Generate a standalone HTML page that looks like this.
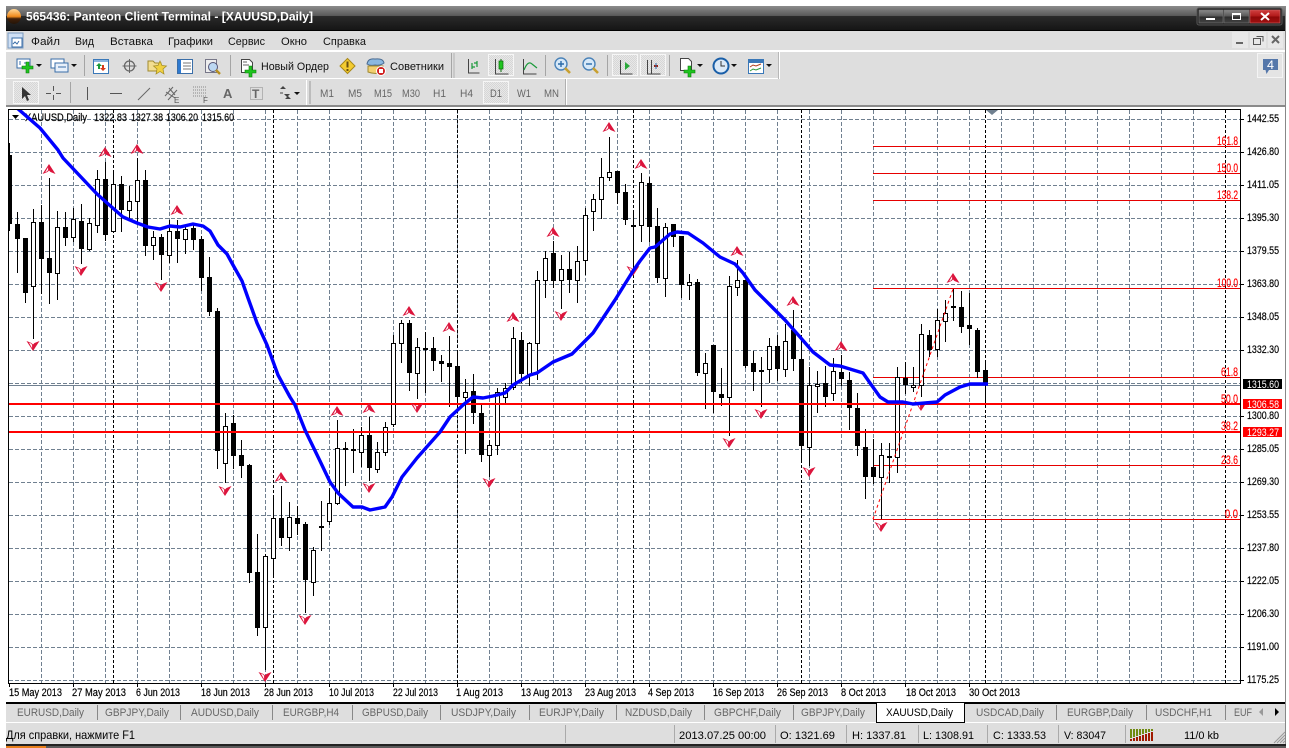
<!DOCTYPE html>
<html><head><meta charset="utf-8"><title>Panteon Client Terminal</title>
<style>
html,body{margin:0;padding:0;background:#fff;width:1289px;height:748px;overflow:hidden}
svg{display:block;position:absolute;left:0;top:0}
text{font-family:"Liberation Sans","Noto Sans CJK SC",sans-serif;font-size:11px}
.t text{fill:#666}
.c{shape-rendering:crispEdges}
.b text{stroke:currentColor;stroke-width:.2px}
</style></head><body>
<svg width="1289" height="748" viewBox="0 0 1289 748" xmlns="http://www.w3.org/2000/svg">
<defs>
<linearGradient id="tg" x1="0" y1="0" x2="0" y2="1"><stop offset="0" stop-color="#8c8c8c"/><stop offset=".4" stop-color="#585858"/><stop offset=".41" stop-color="#2a2a2a"/><stop offset="1" stop-color="#141414"/></linearGradient>
<linearGradient id="bg" x1="0" y1="0" x2="0" y2="1"><stop offset="0" stop-color="#8a8a8a"/><stop offset=".5" stop-color="#555"/><stop offset=".51" stop-color="#2c2c2c"/><stop offset="1" stop-color="#444"/></linearGradient>
<linearGradient id="rg" x1="0" y1="0" x2="0" y2="1"><stop offset="0" stop-color="#d04040"/><stop offset=".5" stop-color="#b01818"/><stop offset=".51" stop-color="#8c0808"/><stop offset="1" stop-color="#a01010"/></linearGradient>
<linearGradient id="og" x1="0" y1="0" x2="0" y2="1"><stop offset="0" stop-color="#ffd89a"/><stop offset=".5" stop-color="#f08a1c"/><stop offset=".65" stop-color="#40200a"/><stop offset="1" stop-color="#241408"/></linearGradient>
<pattern id="chk" width="2" height="2" patternUnits="userSpaceOnUse"><rect width="2" height="2" fill="#e8e8e8"/><rect width="1" height="1" fill="#d6d6d6"/><rect x="1" y="1" width="1" height="1" fill="#d6d6d6"/></pattern>
<g id="u"><path d="M-6.500 5L0-5L6.500 5L1.500 3L0 1.500L-1.500 3Z" fill="#dc143c"/><path d="M-3.800 3.200L-.9-1.800V1L-2 2.400Z" fill="#fff"/></g>
<g id="d"><path d="M-6.500-5L-1.500-3L0-1.500L1.500-3L6.500-5L0 5Z" fill="#dc143c"/><path d="M-4-3.400L-1.700-2.400L-.9-1V2.200Z" fill="#fff"/></g>
</defs>

<!-- title bar -->
<rect x="6" y="6" width="1280" height="25" fill="url(#tg)"/>
<rect x="6" y="30" width="1280" height="1" fill="#000"/>
<ellipse cx="14" cy="16.500" rx="7" ry="7.500" fill="url(#og)"/>
<text x="26" y="20.500" fill="#fff" font-weight="bold" style="font-size:12px" textLength="287" lengthAdjust="spacingAndGlyphs">565436: Panteon Client Terminal - [XAUUSD,Daily]</text>
<rect x="1197" y="8" width="85" height="17" rx="2" fill="#222" stroke="#555"/>
<rect x="1199" y="10" width="24" height="13" fill="url(#bg)" stroke="#777" stroke-width=".6"/>
<rect x="1224" y="10" width="25" height="13" fill="url(#bg)" stroke="#777" stroke-width=".6"/>
<rect x="1250" y="10" width="30" height="13" fill="url(#rg)" stroke="#c66" stroke-width=".6"/>
<rect x="1206" y="18" width="9" height="2" fill="#fff"/>
<rect x="1232.500" y="13.500" width="8" height="6" fill="none" stroke="#fff"/><rect x="1232" y="13" width="9" height="2" fill="#fff"/>
<path d="M1261 13L1269 20M1269 13L1261 20" stroke="#fff" stroke-width="2"/>

<!-- menu -->
<rect x="6" y="31" width="1280" height="76" fill="#dedede"/>
<rect x="8" y="33" width="15" height="15" fill="#cfe0f5" stroke="#7a9ac0"/>
<rect x="12" y="38" width="10" height="9" fill="#fff" stroke="#3a6ea8"/>
<path d="M13 44l2-2 2 2 2-3" stroke="#3a6ea8" fill="none"/>
<g fill="#111">
<text x="31" y="45" textLength="29" lengthAdjust="spacingAndGlyphs">Файл</text>
<text x="75" y="45" textLength="19" lengthAdjust="spacingAndGlyphs">Вид</text>
<text x="110" y="45" textLength="43" lengthAdjust="spacingAndGlyphs">Вставка</text>
<text x="168" y="45" textLength="45" lengthAdjust="spacingAndGlyphs">Графики</text>
<text x="228" y="45" textLength="37" lengthAdjust="spacingAndGlyphs">Сервис</text>
<text x="281" y="45" textLength="26" lengthAdjust="spacingAndGlyphs">Окно</text>
<text x="323" y="45" textLength="43" lengthAdjust="spacingAndGlyphs">Справка</text>
</g>
<g class="c">
<rect x="1232" y="32" width="16" height="16" fill="#e8e8e8"/><rect x="1236" y="42" width="7" height="2" fill="#666"/>
<rect x="1250" y="32" width="16" height="16" fill="#e8e8e8"/><rect x="1253.500" y="38.500" width="7" height="6" fill="none" stroke="#555"/><path d="M1256.500 36.500h6.500v5" fill="none" stroke="#555"/>
<rect x="1268" y="32" width="15" height="16" fill="#e8e8e8"/></g>
<path d="M1272 36l7 7M1279 36l-7 7" stroke="#666" stroke-width="2"/>

<!-- toolbars structure -->
<g class="c">
<rect x="6" y="50" width="1280" height="2" fill="#fff"/>
<rect x="6" y="78" width="774" height="1" fill="#fff"/>
<rect x="779" y="52" width="1" height="27" fill="#fff"/><rect x="778" y="52" width="1" height="27" fill="#b8b8b8"/>
<rect x="566" y="79" width="1" height="26" fill="#fff"/><rect x="565" y="79" width="1" height="26" fill="#b0b0b0"/>
<rect x="6" y="105" width="1280" height="2" fill="#8a8a8a"/>
<rect x="84" y="55" width="1" height="21" fill="#a5a5a5"/>
<rect x="230" y="55" width="1" height="21" fill="#a5a5a5"/>
<rect x="451" y="53" width="1" height="25" fill="#a5a5a5"/><rect x="453" y="53" width="2" height="25" fill="#c8c8c8"/>
<rect x="545" y="55" width="1" height="21" fill="#a5a5a5"/>
<rect x="607" y="55" width="1" height="21" fill="#a5a5a5"/>
<rect x="669" y="55" width="1" height="21" fill="#a5a5a5"/>
<rect x="70" y="82" width="1" height="21" fill="#a5a5a5"/>
<rect x="306" y="80" width="1" height="25" fill="#fff"/><rect x="309" y="81" width="2" height="23" fill="#bcbcbc"/>
<!-- active boxes -->
<rect x="488.500" y="54.500" width="25" height="21" fill="url(#chk)" stroke="#f6f6f6"/>
<rect x="612.500" y="54.500" width="25" height="21" fill="url(#chk)" stroke="#f6f6f6"/>
<rect x="640.500" y="54.500" width="25" height="21" fill="url(#chk)" stroke="#f6f6f6"/>
<rect x="13.500" y="81.500" width="25" height="22" fill="url(#chk)" stroke="#f6f6f6"/>
<rect x="483.500" y="81.500" width="25" height="22" fill="url(#chk)" stroke="#f6f6f6"/>
<rect x="1257.500" y="53.500" width="25" height="24" fill="#e4e4e4" stroke="#f4f4f4"/>
</g>

<!-- toolbar 1 icons -->
<rect x="17" y="59" width="13" height="9" fill="#fff" stroke="#3a6ea8"/><path d="M20 61v4M24 63h4" stroke="#3a6ea8"/>
<path d="M26 62h3v4h4v3h-4v4h-3v-4h-4v-3h4z" fill="#1fc41f" stroke="#0a7a0a" stroke-width=".6"/>
<path d="M36 64h6l-3 3z" fill="#111"/>
<rect x="51" y="59" width="13" height="9" fill="#fff" stroke="#3a6ea8"/><rect x="55" y="63" width="13" height="9" fill="#e8f0fa" stroke="#3a6ea8"/><path d="M58 67h8" stroke="#3a6ea8"/>
<path d="M71 64h6l-3 3z" fill="#111"/>
<rect x="93.500" y="59.500" width="15" height="14" fill="#fff" stroke="#3a78b8"/><rect x="94" y="60" width="14" height="2" fill="#8ab4e0"/><path d="M99 63l3 3h-2v3h-2v-3h-2z" fill="#1a9a3a"/><path d="M103 71l-3-3h2v-3h2v3h2z" fill="#d83a1a"/>
<circle cx="129.500" cy="66" r="5" fill="none" stroke="#666" stroke-width="1.300"/><path d="M129.500 59v14M122.500 66h14" stroke="#666"/>
<path d="M148 61h5l2 2h6v8h-13z" fill="#f2dd90" stroke="#a08a30"/><path d="M160 61l2 4.500 4.500.5-3.500 3 1 5-4-2.500-4 2.500 1-5-3.500-3 4.500-.5z" fill="#f0d040" stroke="#a08a20" stroke-width=".7"/>
<rect x="177.500" y="59.500" width="15" height="14" fill="#fff" stroke="#3a6ea8"/><rect x="178" y="60" width="3" height="13" fill="#2f7ad0"/><path d="M183 63h8M183 66h8M183 69h8" stroke="#777"/>
<rect x="205.500" y="59.500" width="11" height="13" fill="#eee" stroke="#778"/><circle cx="213" cy="67" r="4.500" fill="#bcd8f2" stroke="#557"/><path d="M216 70l4 4" stroke="#b89020" stroke-width="2.400"/>
<path d="M241.500 59.500h8l3 3v10h-11z" fill="#fff" stroke="#444"/><path d="M243 62h4M243 65h6" stroke="#666"/>
<path d="M249 66h3v4h4v3h-4v4h-3v-4h-4v-3h4z" fill="#1fc41f" stroke="#0a7a0a" stroke-width=".6"/>
<text x="261" y="70" fill="#111" textLength="68" lengthAdjust="spacingAndGlyphs">Новый Ордер</text>
<path d="M347.500 58.500l7.500 7.500-7.500 7.500-7.500-7.500z" fill="#f4cc30" stroke="#a8881a"/><rect x="346.500" y="61.500" width="2" height="6" fill="#6a5010"/><rect x="346.500" y="69" width="2" height="2" fill="#6a5010"/>
<path d="M367 64q1-6 8-5q8-1 9 4q-4 3-9 2q-5 1-8-1z" fill="#8ab8e0" stroke="#4a6a90"/><path d="M368 66h15v6q-7 3-15 0z" fill="#f2d070" stroke="#a08a30"/><circle cx="381" cy="71" r="4.500" fill="#d02020" stroke="#fff"/><rect x="379" y="69" width="4" height="4" fill="#fff"/>
<text x="390" y="70" fill="#111" textLength="54" lengthAdjust="spacingAndGlyphs">Советники</text>
<path d="M468.500 59v14h11" stroke="#444" fill="none"/><path d="M472 63v6M477 61v6M472 67h3M477 63h-3" stroke="#1a9a3a" stroke-width="1.200" fill="none"/>
<path d="M495.500 59v15h13" stroke="#444" fill="none"/><rect x="499" y="61" width="4" height="8" fill="#1fc41f" stroke="#0a6a0a" stroke-width=".7"/><path d="M501 59v2M501 69v3" stroke="#0a6a0a"/>
<path d="M523.500 59v15h13" stroke="#444" fill="none"/><path d="M524 70q4-10 8-6l5 4" stroke="#1a9a3a" fill="none" stroke-width="1.200"/>
<circle cx="561" cy="64" r="6" fill="#d6e8f8" stroke="#4a82b8" stroke-width="1.400"/><path d="M558 64h6M561 61v6" stroke="#2a6aa8" stroke-width="1.400"/><path d="M565 68l5 5" stroke="#c8a030" stroke-width="2.600"/>
<circle cx="589" cy="64" r="6" fill="#d6e8f8" stroke="#4a82b8" stroke-width="1.400"/><path d="M586 64h6" stroke="#2a6aa8" stroke-width="1.400"/><path d="M593 68l5 5" stroke="#c8a030" stroke-width="2.600"/>
<path d="M620.500 60v14h12" stroke="#444" fill="none"/><path d="M625 62l5 4-5 4z" fill="#2aa83a"/>
<path d="M647.500 60v14h13M651.500 60v14" stroke="#444" fill="none"/><path d="M654 66h4" stroke="#a02010" stroke-width="2"/><path d="M656 63v6" stroke="#2a6aa8"/>
<path d="M680.500 58.500h8l3 3v9h-11z" fill="#fff" stroke="#444"/><path d="M688 66h3v4h4v3h-4v4h-3v-4h-4v-3h4z" fill="#1fc41f" stroke="#0a7a0a" stroke-width=".6"/>
<path d="M697 64h6l-3 3z" fill="#111"/>
<circle cx="721" cy="66" r="7.500" fill="#dbe9f7" stroke="#1a5fa8" stroke-width="2"/><path d="M721 61v5h4" stroke="#333" fill="none"/>
<path d="M731 64h6l-3 3z" fill="#111"/>
<rect x="748.500" y="59.500" width="15" height="14" fill="#fff" stroke="#3a78b8"/><rect x="749" y="60" width="14" height="3" fill="#3a78b8"/><path d="M750 67l3-2 3 1 5-2" stroke="#b04020" fill="none"/><path d="M750 71l3-2 3 1 5-2" stroke="#2a9a3a" fill="none"/>
<path d="M766 64h6l-3 3z" fill="#111"/>
<path d="M1263 59h15v11h-9l-2.500 4-1-4h-2.500z" fill="#5577aa"/>
<text x="1267" y="69" fill="#fff" textLength="7" lengthAdjust="spacingAndGlyphs" style="font-size:12px">4</text>

<!-- toolbar 2 icons -->
<path d="M22 87v12l3-3 2 5 2-1-2-5h4z" fill="#333"/>
<path d="M53.500 86v5M53.500 95v5M46 93.500h5M56 93.500h5" stroke="#555" fill="none"/>
<path d="M87.500 87v13" stroke="#555"/>
<path d="M110 93.500h12" stroke="#555"/>
<path d="M138 100l12-12" stroke="#666"/>
<path d="M165 96l8-9M168 100l9-10M166 92l9 6M169 88l6 7" stroke="#666" fill="none"/><text x="174" y="103" fill="#555" style="font-size:8px">E</text>
<path d="M193 87h13M193 90h13M193 93h13M193 96h13" stroke="#888" stroke-dasharray="1 1"/><text x="203" y="103" fill="#555" style="font-size:8px">F</text>
<text x="223" y="98" fill="#666" font-weight="bold" style="font-size:13px">A</text>
<rect x="250.500" y="87.500" width="12" height="12" fill="none" stroke="#888" stroke-dasharray="1 1"/><text x="252" y="98" fill="#666" font-weight="bold" style="font-size:12px" textLength="9">T</text>
<path d="M280 89l3-3 3 3zM284 94l3 3 3-3zM285 99l3-3 3 3z" fill="#444"/><path d="M280 93h3" stroke="#444"/>
<path d="M294 92h6l-3 3z" fill="#111"/>
<g fill="#666">
<text x="320" y="97" textLength="14" lengthAdjust="spacingAndGlyphs">M1</text>
<text x="348" y="97" textLength="14" lengthAdjust="spacingAndGlyphs">M5</text>
<text x="374" y="97" textLength="18" lengthAdjust="spacingAndGlyphs">M15</text>
<text x="402" y="97" textLength="18" lengthAdjust="spacingAndGlyphs">M30</text>
<text x="433" y="97" textLength="13" lengthAdjust="spacingAndGlyphs">H1</text>
<text x="460" y="97" textLength="13" lengthAdjust="spacingAndGlyphs">H4</text>
<text x="490" y="97" textLength="12" lengthAdjust="spacingAndGlyphs">D1</text>
<text x="517" y="97" textLength="14" lengthAdjust="spacingAndGlyphs">W1</text>
<text x="544" y="97" textLength="15" lengthAdjust="spacingAndGlyphs">MN</text>
</g>

<!-- chart -->
<g class="c">
<rect x="8" y="109" width="1232" height="574" fill="#fff"/>
<path stroke="#708090" stroke-dasharray="4 2" fill="none" d="M9 119.500H1240M9 152.500H1240M9 185.500H1240M9 218.500H1240M9 251.500H1240M9 284.500H1240M9 317.500H1240M9 350.500H1240M9 383.500H1240M9 416.500H1240M9 449.500H1240M9 482.500H1240M9 515.500H1240M9 548.500H1240M9 581.500H1240M9 614.500H1240M9 647.500H1240M9 680.500H1240"/>
<path stroke="#708090" stroke-dasharray="4 2" fill="none" d="M41.500 110V683M73.500 110V683M105.500 110V683M137.500 110V683M169.500 110V683M201.500 110V683M233.500 110V683M265.500 110V683M297.500 110V683M329.500 110V683M361.500 110V683M393.500 110V683M425.500 110V683M457.500 110V683M489.500 110V683M521.500 110V683M553.500 110V683M585.500 110V683M617.500 110V683M649.500 110V683M681.500 110V683M713.500 110V683M745.500 110V683M777.500 110V683M809.500 110V683M841.500 110V683M873.500 110V683M905.500 110V683M937.500 110V683M969.500 110V683M1001.500 110V683M1033.500 110V683M1065.500 110V683M1097.500 110V683M1129.500 110V683M1161.500 110V683M1193.500 110V683"/>
<path stroke="#000" stroke-dasharray="3 2" fill="none" d="M113.500 110V683M273.500 110V683M457.500 110V683M633.500 110V683M801.500 110V683M985.500 110V683M1225.500 110V683"/>
<rect x="9" y="385" width="1231" height="1" fill="#708090"/>
</g>
<path d="M12 115h7l-3.500 4z" fill="#000"/>
<g fill="#000" class="b" color="#000">
<text x="25" y="121" textLength="62" lengthAdjust="spacingAndGlyphs">XAUUSD,Daily</text>
<text x="94" y="121" textLength="33" lengthAdjust="spacingAndGlyphs">1322.83</text>
<text x="131" y="121" textLength="32" lengthAdjust="spacingAndGlyphs">1327.38</text>
<text x="166" y="121" textLength="32" lengthAdjust="spacingAndGlyphs">1306.20</text>
<text x="202" y="121" textLength="32" lengthAdjust="spacingAndGlyphs">1315.60</text>
</g>
<path d="M986 110h12l-6 5z" fill="#708090"/>

<!-- fibo -->
<g class="c" fill="#e60000">
<rect x="873" y="146" width="367" height="1"/><rect x="873" y="173" width="367" height="1"/><rect x="873" y="200" width="367" height="1"/>
<rect x="873" y="288" width="367" height="1"/><rect x="873" y="377" width="367" height="1"/><rect x="873" y="465" width="367" height="1"/><rect x="873" y="519" width="367" height="1"/>
</g>

<!-- candles -->
<clipPath id="cc"><rect x="9" y="110" width="1231" height="573"/></clipPath>
<g class="c" clip-path="url(#cc)">
<path stroke="#000" fill="none" d="M9.500 143V231M17.500 212V273M25.500 238V303M33.500 209V339M41.500 205V294M49.500 178V304M57.500 211V300M65.500 212V246M73.500 208V242M81.500 204V264M89.500 218V251M97.500 170V233M105.500 162V241M113.500 171V232M121.500 176V232M129.500 186V221M137.500 158V225M145.500 170V256M153.500 231V260M161.500 234V280M169.500 220V263M177.500 220V263M185.500 225V254M193.500 225V250M201.500 236V291M209.500 257V316M217.500 308V469M225.500 413V483M233.500 415V469M241.500 440V478M249.500 464V583M257.500 534V636M265.500 554V670M273.500 498V576M281.500 486V546M289.500 502V551M297.500 506V535M305.500 522V613M313.500 547V596M321.500 501V551M329.500 488V525M337.500 420V505M345.500 442V486M353.500 429V473M361.500 427V467M369.500 417V481M377.500 442V473M385.500 422V456M393.500 335V427M401.500 320V363M409.500 320V391M417.500 338V399M425.500 332V393M433.500 337V371M441.500 355V382M449.500 336V407M457.500 353V405M465.500 379V454M473.500 374V424M481.500 405V462M489.500 440V477M497.500 388V455M505.500 383V403M513.500 327V390M521.500 332V383M529.500 342V386M537.500 271V380M545.500 251V298M553.500 241V288M561.500 255V309M569.500 252V293M577.500 246V303M585.500 208V275M593.500 194V231M601.500 158V219M609.500 137V181M617.500 171V204M625.500 184V225M633.500 211V265M641.500 173V242M649.500 177V242M657.500 208V283M665.500 223V297M673.500 224V247M681.500 236V298M689.500 274V300M697.500 279V376M705.500 353V409M713.500 345V413M721.500 368V406M729.500 276V436M737.500 260V296M745.500 280V368M753.500 351V391M761.500 357V407M769.500 338V383M777.500 335V381M785.500 324V377M793.500 310V371M801.500 340V463M809.500 367V466M817.500 371V413M825.500 366V407M833.500 358V401M841.500 355V386M849.500 372V430M857.500 393V456M865.500 429V499M873.500 439V484M881.500 443V519M889.500 443V483M897.500 367V473M905.500 362V394M913.500 367V392M921.500 324V397M929.500 330V357M937.500 309V357M945.500 300V342M953.500 289V321M961.500 291V333M969.500 293V345M977.500 328V378M985.500 360V403"/>
<path fill="#000" d="M7 155h5v69h-5zM15 224h5v15h-5zM23 238h5v55h-5zM39 222h5v37h-5zM47 258h5v15h-5zM63 227h5v11h-5zM79 221h5v28h-5zM103 179h5v56h-5zM119 184h5v26h-5zM143 180h5v66h-5zM159 237h5v18h-5zM175 231h5v8h-5zM191 228h5v12h-5zM199 239h5v39h-5zM207 277h5v35h-5zM215 311h5v140h-5zM231 423h5v33h-5zM239 455h5v11h-5zM247 465h5v108h-5zM255 572h5v56h-5zM279 518h5v20h-5zM295 518h5v6h-5zM303 524h5v56h-5zM319 526h5v2h-5zM343 448h5v2h-5zM351 449h5v2h-5zM367 435h5v33h-5zM407 323h5v50h-5zM423 348h5v2h-5zM431 348h5v13h-5zM439 361h5v3h-5zM447 363h5v4h-5zM455 366h5v31h-5zM471 391h5v22h-5zM479 413h5v42h-5zM519 340h5v34h-5zM551 253h5v28h-5zM567 269h5v11h-5zM615 171h5v22h-5zM623 192h5v28h-5zM631 225h5v2h-5zM647 183h5v44h-5zM655 226h5v52h-5zM671 224h5v13h-5zM679 236h5v49h-5zM695 282h5v91h-5zM711 345h5v47h-5zM719 394h5v4h-5zM743 280h5v86h-5zM751 363h5v9h-5zM759 370h5v2h-5zM775 346h5v23h-5zM791 330h5v29h-5zM799 359h5v87h-5zM823 383h5v14h-5zM839 372h5v7h-5zM847 380h5v28h-5zM855 408h5v38h-5zM863 447h5v30h-5zM871 467h5v10h-5zM887 456h5v2h-5zM903 378h5v7h-5zM927 335h5v15h-5zM951 306h5v2h-5zM959 307h5v20h-5zM967 325h5v4h-5zM975 330h5v42h-5zM983 370h5v15h-5z"/>
<path fill="#fff" stroke="#000" d="M31.500 222.500h4v64h-4zM55.500 227.500h4v46h-4zM71.500 219.500h4v18h-4zM87.500 223.500h4v26h-4zM95.500 179.500h4v46h-4zM111.500 184.500h4v47h-4zM127.500 201.500h4v9h-4zM135.500 180.500h4v21h-4zM151.500 237.500h4v8h-4zM167.500 231.500h4v24h-4zM183.500 229.500h4v10h-4zM223.500 426.500h4v37h-4zM263.500 556.500h4v71h-4zM271.500 518.500h4v40h-4zM287.500 517.500h4v20h-4zM311.500 550.500h4v32h-4zM327.500 503.500h4v18h-4zM335.500 448.500h4v55h-4zM359.500 435.500h4v17h-4zM375.500 452.500h4v17h-4zM383.500 427.500h4v25h-4zM391.500 343.500h4v81h-4zM399.500 323.500h4v20h-4zM415.500 347.500h4v26h-4zM463.500 392.500h4v5h-4zM487.500 445.500h4v10h-4zM495.500 392.500h4v53h-4zM503.500 388.500h4v9h-4zM511.500 338.500h4v49h-4zM527.500 343.500h4v31h-4zM535.500 280.500h4v63h-4zM543.500 258.500h4v22h-4zM559.500 269.500h4v11h-4zM575.500 261.500h4v19h-4zM583.500 215.500h4v45h-4zM591.500 199.500h4v12h-4zM599.500 177.500h4v22h-4zM607.500 172.500h4v5h-4zM639.500 182.500h4v43h-4zM663.500 227.500h4v51h-4zM687.500 282.500h4v3h-4zM703.500 363.500h4v10h-4zM727.500 286.500h4v111h-4zM735.500 280.500h4v7h-4zM767.500 346.500h4v23h-4zM783.500 341.500h4v28h-4zM807.500 385.500h4v62h-4zM815.500 384.500h4v2h-4zM831.500 371.500h4v22h-4zM879.500 455.500h4v22h-4zM895.500 377.500h4v80h-4zM911.500 385.500h4v2h-4zM919.500 334.500h4v51h-4zM935.500 320.500h4v29h-4zM943.500 313.500h4v8h-4z"/>
</g>

<!-- fibo trend -->
<path d="M873 519L953 289" stroke="#f00" stroke-dasharray="3 3" fill="none"/>

<!-- thick red -->
<g class="c" fill="#f00"><rect x="9" y="403" width="1231" height="2"/><rect x="9" y="431" width="1231" height="2"/></g>

<!-- fractals -->
<use href="#u" x="49" y="169"/><use href="#u" x="105" y="152"/><use href="#u" x="137" y="149"/><use href="#u" x="177" y="210"/><use href="#u" x="281" y="477"/><use href="#u" x="337" y="411"/><use href="#u" x="369" y="408"/><use href="#u" x="409" y="311"/><use href="#u" x="449" y="327"/><use href="#u" x="513" y="317"/><use href="#u" x="553" y="232"/><use href="#u" x="609" y="127"/><use href="#u" x="641" y="164"/><use href="#u" x="737" y="251"/><use href="#u" x="793" y="301"/><use href="#u" x="841" y="346"/><use href="#u" x="953" y="278"/>
<use href="#d" x="33" y="346"/><use href="#d" x="81" y="271"/><use href="#d" x="161" y="287"/><use href="#d" x="225" y="491"/><use href="#d" x="265" y="677"/><use href="#d" x="305" y="620"/><use href="#d" x="369" y="488"/><use href="#d" x="417" y="408"/><use href="#d" x="489" y="483"/><use href="#d" x="561" y="316"/><use href="#d" x="633" y="271"/><use href="#d" x="729" y="443"/><use href="#d" x="761" y="414"/><use href="#d" x="809" y="472"/><use href="#d" x="921" y="406"/><use href="#d" x="881" y="527"/>

<!-- MA -->
<clipPath id="cm"><rect x="9" y="110" width="1231" height="573"/></clipPath>
<polyline clip-path="url(#cm)" fill="none" stroke="#0000ff" stroke-width="3.400" stroke-linejoin="round" points="17,108 40,128 58,150 63,158 80,176 97,194 115,210 123,217 137,223 148,227 160,229 170,226 180,227 193,224 203,226 210,231 218,245 227,254 233,265 242,281 248,298 257,323 267,345 278,375 290,397 295,405 305,430 320,461 330,482 338,493 353,507 362,507 370,510 385,507 392,497 402,477 417,458 440,432 450,417 463,405 473,397 483,398 493,396 505,393 513,385 530,375 537,373 553,362 572,354 593,333 615,300 633,271 640,261 650,248 655,247 670,234 677,232 688,233 703,243 720,257 735,264 743,273 755,290 773,308 785,320 800,337 813,352 830,365 840,366 863,373 870,383 880,397 888,402 903,402 913,404 937,402 945,395 960,387 970,384 988,384"/>

<!-- fibo labels -->
<g fill="#f00" text-anchor="end" class="b" color="#f00" style="font-size:12px">
<text x="1238" y="145" style="font-size:12px" textLength="21" lengthAdjust="spacingAndGlyphs">161.8</text>
<text x="1238" y="172" style="font-size:12px" textLength="21" lengthAdjust="spacingAndGlyphs">150.0</text>
<text x="1238" y="199" style="font-size:12px" textLength="21" lengthAdjust="spacingAndGlyphs">138.2</text>
<text x="1238" y="287" style="font-size:12px" textLength="21" lengthAdjust="spacingAndGlyphs">100.0</text>
<text x="1238" y="376" style="font-size:12px" textLength="17" lengthAdjust="spacingAndGlyphs">61.8</text>
<text x="1238" y="403" style="font-size:12px" textLength="17" lengthAdjust="spacingAndGlyphs">50.0</text>
<text x="1238" y="430" style="font-size:12px" textLength="17" lengthAdjust="spacingAndGlyphs">38.2</text>
<text x="1238" y="464" style="font-size:12px" textLength="17" lengthAdjust="spacingAndGlyphs">23.6</text>
<text x="1238" y="518" style="font-size:12px" textLength="13" lengthAdjust="spacingAndGlyphs">0.0</text>
</g>

<!-- frame -->
<g class="c" fill="#000">
<rect x="8" y="109" width="1233" height="1"/><rect x="8" y="109" width="1" height="575"/><rect x="1240" y="109" width="1" height="575"/><rect x="8" y="683" width="1233" height="1"/>
<rect x="1241" y="119" width="3" height="1"/><rect x="1241" y="152" width="3" height="1"/><rect x="1241" y="185" width="3" height="1"/><rect x="1241" y="218" width="3" height="1"/><rect x="1241" y="251" width="3" height="1"/><rect x="1241" y="284" width="3" height="1"/><rect x="1241" y="317" width="3" height="1"/><rect x="1241" y="350" width="3" height="1"/><rect x="1241" y="416" width="3" height="1"/><rect x="1241" y="449" width="3" height="1"/><rect x="1241" y="482" width="3" height="1"/><rect x="1241" y="515" width="3" height="1"/><rect x="1241" y="548" width="3" height="1"/><rect x="1241" y="581" width="3" height="1"/><rect x="1241" y="614" width="3" height="1"/><rect x="1241" y="647" width="3" height="1"/><rect x="1241" y="680" width="3" height="1"/>
<rect x="9" y="684" width="1" height="3"/><rect x="73" y="684" width="1" height="3"/><rect x="137" y="684" width="1" height="3"/><rect x="201" y="684" width="1" height="3"/><rect x="265" y="684" width="1" height="3"/><rect x="329" y="684" width="1" height="3"/><rect x="393" y="684" width="1" height="3"/><rect x="457" y="684" width="1" height="3"/><rect x="521" y="684" width="1" height="3"/><rect x="585" y="684" width="1" height="3"/><rect x="649" y="684" width="1" height="3"/><rect x="713" y="684" width="1" height="3"/><rect x="777" y="684" width="1" height="3"/><rect x="841" y="684" width="1" height="3"/><rect x="905" y="684" width="1" height="3"/><rect x="969" y="684" width="1" height="3"/>
</g>

<!-- price axis -->
<g fill="#000" class="b" color="#000">
<text x="1247" y="122" textLength="32" lengthAdjust="spacingAndGlyphs">1442.55</text>
<text x="1247" y="155" textLength="32" lengthAdjust="spacingAndGlyphs">1426.80</text>
<text x="1247" y="188" textLength="32" lengthAdjust="spacingAndGlyphs">1411.05</text>
<text x="1247" y="221" textLength="32" lengthAdjust="spacingAndGlyphs">1395.30</text>
<text x="1247" y="254" textLength="32" lengthAdjust="spacingAndGlyphs">1379.55</text>
<text x="1247" y="287" textLength="32" lengthAdjust="spacingAndGlyphs">1363.80</text>
<text x="1247" y="320" textLength="32" lengthAdjust="spacingAndGlyphs">1348.05</text>
<text x="1247" y="353" textLength="32" lengthAdjust="spacingAndGlyphs">1332.30</text>
<text x="1247" y="419" textLength="32" lengthAdjust="spacingAndGlyphs">1300.80</text>
<text x="1247" y="452" textLength="32" lengthAdjust="spacingAndGlyphs">1285.05</text>
<text x="1247" y="485" textLength="32" lengthAdjust="spacingAndGlyphs">1269.30</text>
<text x="1247" y="518" textLength="32" lengthAdjust="spacingAndGlyphs">1253.55</text>
<text x="1247" y="551" textLength="32" lengthAdjust="spacingAndGlyphs">1237.80</text>
<text x="1247" y="584" textLength="32" lengthAdjust="spacingAndGlyphs">1222.05</text>
<text x="1247" y="617" textLength="32" lengthAdjust="spacingAndGlyphs">1206.30</text>
<text x="1247" y="650" textLength="32" lengthAdjust="spacingAndGlyphs">1191.00</text>
<text x="1247" y="683" textLength="32" lengthAdjust="spacingAndGlyphs">1175.25</text>
</g>
<g class="c"><rect x="1243" y="379" width="39" height="10" fill="#000"/><rect x="1243" y="399" width="39" height="10" fill="#f00"/><rect x="1243" y="427" width="39" height="10" fill="#f00"/></g>
<g fill="#fff">
<text x="1247" y="388" textLength="32" lengthAdjust="spacingAndGlyphs">1315.60</text>
<text x="1247" y="408" textLength="32" lengthAdjust="spacingAndGlyphs">1306.58</text>
<text x="1247" y="436" textLength="32" lengthAdjust="spacingAndGlyphs">1293.27</text>
</g>

<!-- time axis -->
<g fill="#000" class="b" color="#000">
<text x="9" y="696" textLength="53" lengthAdjust="spacingAndGlyphs">15 May 2013</text>
<text x="72" y="696" textLength="54" lengthAdjust="spacingAndGlyphs">27 May 2013</text>
<text x="136" y="696" textLength="44" lengthAdjust="spacingAndGlyphs">6 Jun 2013</text>
<text x="201" y="696" textLength="49" lengthAdjust="spacingAndGlyphs">18 Jun 2013</text>
<text x="264" y="696" textLength="49" lengthAdjust="spacingAndGlyphs">28 Jun 2013</text>
<text x="329" y="696" textLength="45" lengthAdjust="spacingAndGlyphs">10 Jul 2013</text>
<text x="393" y="696" textLength="45" lengthAdjust="spacingAndGlyphs">22 Jul 2013</text>
<text x="456" y="696" textLength="47" lengthAdjust="spacingAndGlyphs">1 Aug 2013</text>
<text x="521" y="696" textLength="51" lengthAdjust="spacingAndGlyphs">13 Aug 2013</text>
<text x="585" y="696" textLength="51" lengthAdjust="spacingAndGlyphs">23 Aug 2013</text>
<text x="648" y="696" textLength="46" lengthAdjust="spacingAndGlyphs">4 Sep 2013</text>
<text x="713" y="696" textLength="51" lengthAdjust="spacingAndGlyphs">16 Sep 2013</text>
<text x="777" y="696" textLength="51" lengthAdjust="spacingAndGlyphs">26 Sep 2013</text>
<text x="841" y="696" textLength="45" lengthAdjust="spacingAndGlyphs">8 Oct 2013</text>
<text x="906" y="696" textLength="50" lengthAdjust="spacingAndGlyphs">18 Oct 2013</text>
<text x="969" y="696" textLength="51" lengthAdjust="spacingAndGlyphs">30 Oct 2013</text>
</g>

<!-- tabs -->
<g class="c">
<rect x="6" y="702" width="1280" height="42" fill="#dedede"/>
<rect x="6" y="702" width="1280" height="2" fill="#000"/>
<rect x="6" y="722" width="1280" height="1" fill="#fff"/>
<rect x="876" y="702" width="89" height="21" fill="#000"/>
<rect x="877" y="703" width="87" height="19" fill="#fff"/>
<g fill="#888"><rect x="97" y="705" width="1" height="15"/><rect x="180" y="705" width="1" height="15"/><rect x="272" y="705" width="1" height="15"/><rect x="352" y="705" width="1" height="15"/><rect x="440" y="705" width="1" height="15"/><rect x="529" y="705" width="1" height="15"/><rect x="616" y="705" width="1" height="15"/><rect x="704" y="705" width="1" height="15"/><rect x="793" y="705" width="1" height="15"/><rect x="1056" y="705" width="1" height="15"/><rect x="1146" y="705" width="1" height="15"/><rect x="1225" y="705" width="1" height="15"/></g>
<rect x="1253" y="704" width="32" height="18" fill="#dedede"/>
</g>
<g class="t">
<text x="17" y="716" textLength="67" lengthAdjust="spacingAndGlyphs">EURUSD,Daily</text>
<text x="105" y="716" textLength="64" lengthAdjust="spacingAndGlyphs">GBPJPY,Daily</text>
<text x="191" y="716" textLength="68" lengthAdjust="spacingAndGlyphs">AUDUSD,Daily</text>
<text x="283" y="716" textLength="56" lengthAdjust="spacingAndGlyphs">EURGBP,H4</text>
<text x="362" y="716" textLength="66" lengthAdjust="spacingAndGlyphs">GBPUSD,Daily</text>
<text x="451" y="716" textLength="65" lengthAdjust="spacingAndGlyphs">USDJPY,Daily</text>
<text x="539" y="716" textLength="65" lengthAdjust="spacingAndGlyphs">EURJPY,Daily</text>
<text x="625" y="716" textLength="67" lengthAdjust="spacingAndGlyphs">NZDUSD,Daily</text>
<text x="714" y="716" textLength="67" lengthAdjust="spacingAndGlyphs">GBPCHF,Daily</text>
<text x="801" y="716" textLength="64" lengthAdjust="spacingAndGlyphs">GBPJPY,Daily</text>
<text x="976" y="716" textLength="68" lengthAdjust="spacingAndGlyphs">USDCAD,Daily</text>
<text x="1067" y="716" textLength="66" lengthAdjust="spacingAndGlyphs">EURGBP,Daily</text>
<text x="1155" y="716" textLength="57" lengthAdjust="spacingAndGlyphs">USDCHF,H1</text>
<text x="1234" y="716" textLength="18" lengthAdjust="spacingAndGlyphs">EUF</text>
</g>
<text x="886" y="716" fill="#000" textLength="67" lengthAdjust="spacingAndGlyphs">XAUUSD,Daily</text>
<path d="M1263 708v8l-4-4z" fill="#999"/><path d="M1275 708v8l4-4z" fill="#000"/>

<!-- status -->
<g fill="#000">
<text x="6" y="739" textLength="129" lengthAdjust="spacingAndGlyphs" style="font-size:12px">Для справки, нажмите F1</text>
<text x="679" y="739" textLength="87" lengthAdjust="spacingAndGlyphs">2013.07.25 00:00</text>
<text x="780" y="739" textLength="55" lengthAdjust="spacingAndGlyphs">O: 1321.69</text>
<text x="852" y="739" textLength="54" lengthAdjust="spacingAndGlyphs">H: 1337.81</text>
<text x="923" y="739" textLength="51" lengthAdjust="spacingAndGlyphs">L: 1308.91</text>
<text x="993" y="739" textLength="53" lengthAdjust="spacingAndGlyphs">C: 1333.53</text>
<text x="1064" y="739" textLength="42" lengthAdjust="spacingAndGlyphs">V: 83047</text>
<text x="1184" y="739" textLength="35" lengthAdjust="spacingAndGlyphs">11/0 kb</text>
</g>
<g class="c">
<g fill="#aaa"><rect x="565" y="725" width="1" height="18"/><rect x="674" y="725" width="1" height="18"/><rect x="775" y="725" width="1" height="18"/><rect x="846" y="725" width="1" height="18"/><rect x="918" y="725" width="1" height="18"/><rect x="987" y="725" width="1" height="18"/><rect x="1058" y="725" width="1" height="18"/><rect x="1125" y="725" width="1" height="18"/></g>
<g fill="#6f8a10"><rect x="1130" y="729" width="2" height="9"/><rect x="1133" y="729" width="2" height="8"/><rect x="1136" y="729" width="2" height="7"/><rect x="1139" y="729" width="2" height="6"/><rect x="1142" y="729" width="2" height="5"/><rect x="1145" y="729" width="2" height="4"/><rect x="1148" y="729" width="2" height="3"/><rect x="1151" y="729" width="2" height="2"/></g>
<g fill="#a01a00"><rect x="1130" y="739" width="2" height="2"/><rect x="1133" y="738" width="2" height="3"/><rect x="1136" y="737" width="2" height="4"/><rect x="1139" y="736" width="2" height="5"/><rect x="1142" y="735" width="2" height="6"/><rect x="1145" y="734" width="2" height="7"/><rect x="1148" y="733" width="2" height="8"/><rect x="1151" y="732" width="2" height="9"/></g>
</g>
<path d="M1274 743l11-11M1277 743l8-8M1280 743l5-5M1283 743l2-2" stroke="#999"/>
<g class="c"><rect x="6" y="744" width="1280" height="2" fill="#222"/><rect x="6" y="746" width="1280" height="2" fill="#5a5a5a"/><rect x="6" y="746" width="40" height="2" fill="#e8801c"/><rect x="1285" y="6" width="1" height="738" fill="#888"/></g>
</svg>
</body></html>
